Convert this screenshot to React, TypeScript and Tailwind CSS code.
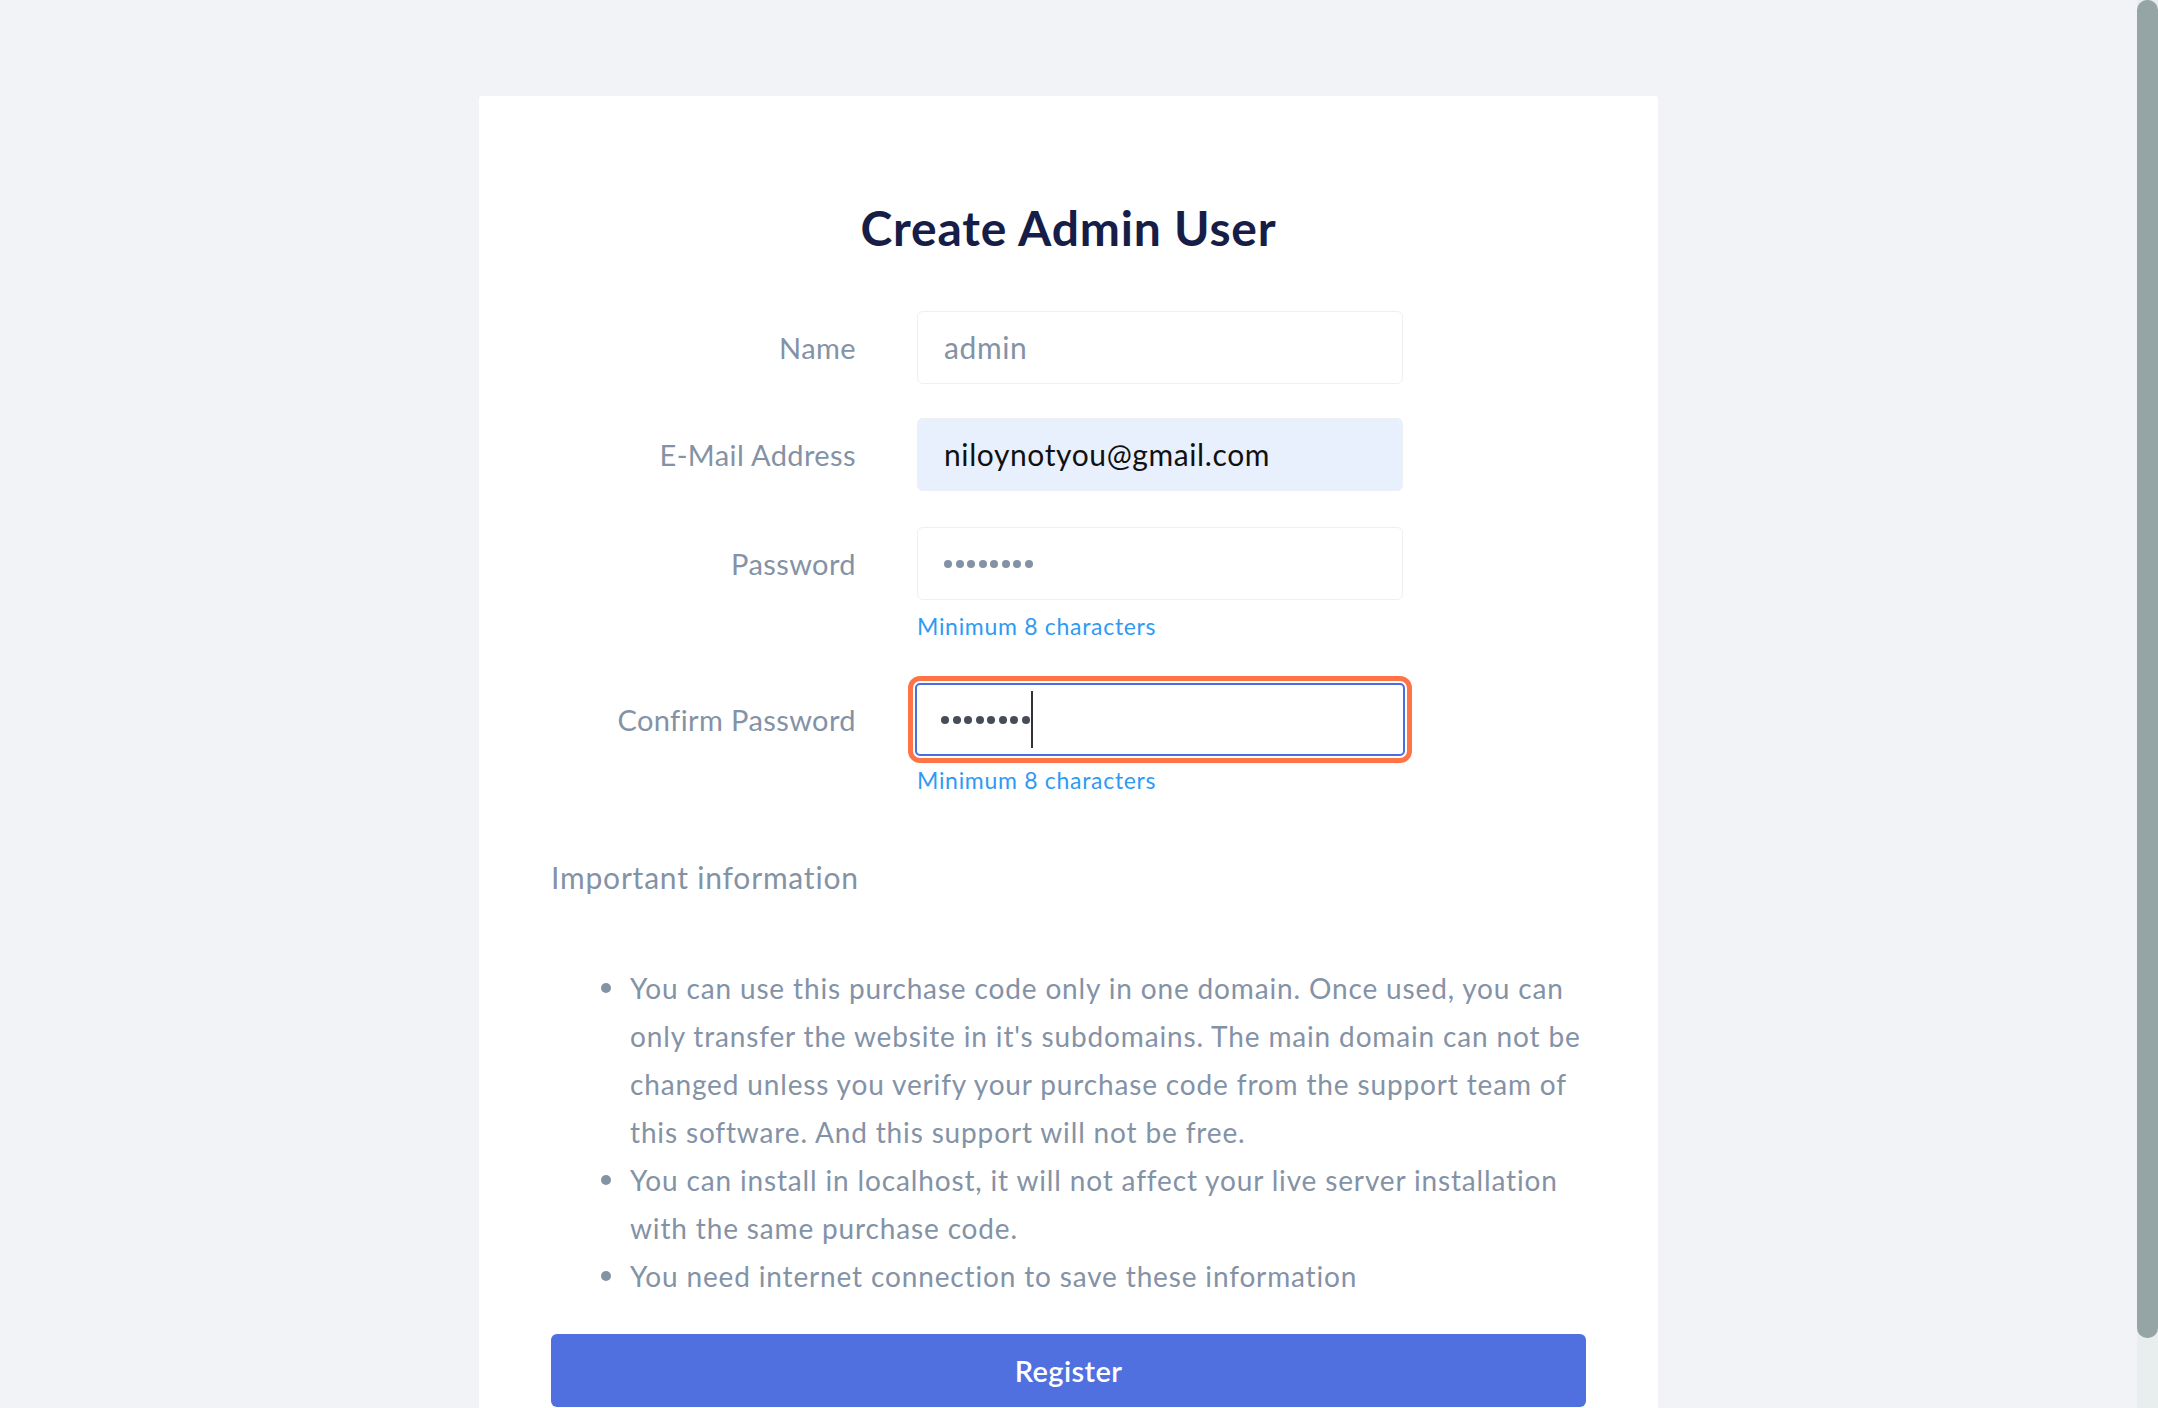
import React from "react";

const font = { fontFamily: "Lato, 'Noto Sans', sans-serif" };

type Field = {
    label: string;
    value: string;
    kind: "plain" | "autofill" | "password" | "focused";
    hint?: boolean;
    gap: string;
};

const fields: Field[] = [
    { label: "Name", value: "admin", kind: "plain", gap: "mb-[34px]" },
    { label: "E-Mail Address", value: "niloynotyou@gmail.com", kind: "autofill", gap: "mb-[36px]" },
    { label: "Password", value: "", kind: "password", hint: true, gap: "mb-[43px]" },
    { label: "Confirm Password", value: "", kind: "focused", hint: true, gap: "mb-0" },
];

const notes = [
    "You can use this purchase code only in one domain. Once used, you can only transfer the website in it's subdomains. The main domain can not be changed unless you verify your purchase code from the support team of this software. And this support will not be free.",
    "You can install in localhost, it will not affect your live server installation with the same purchase code.",
    "You need internet connection to save these information",
];

// masked password: 8 small dots
function Dots({ dark }: { dark?: boolean }) {
    return (
        <div className="flex gap-[3.5px]">
            {[0, 1, 2, 3, 4, 5, 6, 7].map((i) => (
                <span key={i} className={`h-[8px] w-[8px] rounded-full ${dark ? "bg-[#474d57]" : "bg-[#8492a6]"}`} />
            ))}
        </div>
    );
}

function FieldBox({ field }: { field: Field }) {
    if (field.kind === "focused") {
        return (
            <div className="-m-[9px] rounded-[12px] border-[5px] border-[#ff7446] p-[2px]">
                <div className="flex h-[73px] items-center rounded-[5px] border-2 border-[#4a6ee0] bg-white pl-[24px]">
                    <Dots dark />
                    <span className="ml-[1px] h-[57px] w-[2px] bg-[#333]" />
                </div>
            </div>
        );
    }
    const bg = field.kind === "autofill" ? "bg-[#e8f0fe]" : "bg-white";
    const color = field.kind === "autofill" ? "text-[#111]" : "text-[#8492a6]";
    return (
        <div className={`flex h-[73px] items-center rounded-[6px] border border-[#eceff3] pl-[26px] ${bg}`}>
            {field.kind === "password" ? (
                <Dots />
            ) : (
                <span className={`text-[30px] tracking-[0.6px] ${color}`}>{field.value}</span>
            )}
        </div>
    );
}

export default function App() {
    return (
        <div className="flex h-[1408px] overflow-hidden bg-[#f1f3f7]" style={font}>
            <div className="flex flex-1 justify-center pt-[96px]">
                <div className="w-[1179px] rounded-t-[3px] bg-white px-[72px] pt-[104px]">
                    <h1 className="text-center text-[48px] font-bold leading-[56px] tracking-[0.8px] text-[#161d47]">
                        Create Admin User
                    </h1>

                    <div className="mt-[55px]">
                        {fields.map((f) => (
                            <div key={f.label} className={f.gap}>
                                <div className="grid grid-cols-[305px_486px] items-center gap-x-[61px]">
                                    <label className="text-right text-[29px] tracking-[0.4px] text-[#8492a6]">{f.label}</label>
                                    <FieldBox field={f} />
                                </div>
                                {f.hint && (
                                    <div className="ml-[366px] mt-[10px] text-[23px] leading-[32px] tracking-[0.7px] text-[#2f9af3]">
                                        Minimum 8 characters
                                    </div>
                                )}
                            </div>
                        ))}
                    </div>

                    <h2 className="mt-[61px] text-[30px] leading-[40px] tracking-[0.8px] text-[#8492a6]">Important information</h2>

                    <ul className="mt-[67px]">
                        {notes.map((n, i) => (
                            <li key={i} className="flex text-[28px] leading-[48px] tracking-[0.85px] text-[#8492a6]">
                                <div className="flex h-[48px] w-[79px] shrink-0 items-center justify-end pr-[19px]">
                                    <span className="h-[10px] w-[10px] rounded-full bg-[#8492a6]" />
                                </div>
                                <span>{n}</span>
                            </li>
                        ))}
                    </ul>

                    <button className="mt-[34px] flex h-[73px] w-full items-center justify-center rounded-[6px] bg-[#5170e0] text-[29px] font-semibold tracking-[0.4px] text-white">
                        Register
                    </button>
                </div>
            </div>

            {/* fake scrollbar */}
            <div className="flex w-[21px] flex-col bg-[#e8eded]">
                <div className="h-[1338px] rounded-[10px] bg-[#95a4a4]" />
            </div>
        </div>
    );
}
